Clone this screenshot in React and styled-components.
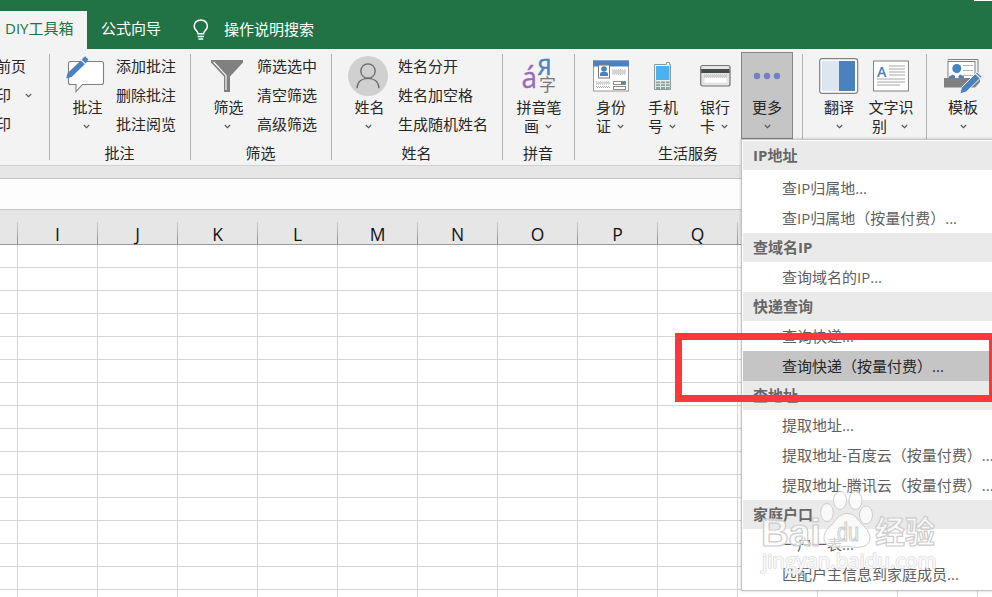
import React from "react";
import styled, { createGlobalStyle, css } from "styled-components";

const FONT = `"Open Sans", "Noto Sans CJK SC", sans-serif`;

const columns = ["I", "J", "K", "L", "M", "N", "O", "P", "Q", "R", "S", "T", "U"];

const menu = [
  { title: "IP地址", spaced: true, items: ["查IP归属地...", "查IP归属地（按量付费）..."] },
  { title: "查域名IP", items: ["查询域名的IP..."] },
  { title: "快递查询", items: ["查询快递...", "查询快递（按量付费）..."] },
  {
    title: "查地址",
    items: ["提取地址...", "提取地址-百度云（按量付费）...", "提取地址-腾讯云（按量付费）..."],
  },
  { title: "家庭户口", items: ["一户一表...", "匹配户主信息到家庭成员..."] },
];

const ACTIVE_ITEM = "查询快递（按量付费）...";

const Caret = () => (
  <CaretSvg viewBox="0 0 7 5">
    <path d="M0.8 1 L3.5 3.7 L6.2 1" fill="none" stroke="#555" strokeWidth="1.1" />
  </CaretSvg>
);

const BulbIcon = () => (
  <svg width="16" height="22" viewBox="0 0 16 22" fill="none" stroke="#fff" strokeWidth="1.5">
    <path d="M5 14.8 C5 12 1.2 11 1.2 7.2 C1.2 3.4 4.2 0.9 7.8 0.9 C11.4 0.9 14.4 3.4 14.4 7.2 C14.4 11 10.6 12 10.6 14.8 Z" />
    <path d="M4.6 17.4 H11 M5.4 19.9 H10.2" />
  </svg>
);

const CommentIcon = () => (
  <svg width="40" height="40" viewBox="0 0 40 40">
    <path
      d="M4.5 5.5 H35.5 Q37.5 5.5 37.5 7.5 V26.5 Q37.5 28.5 35.5 28.5 H16.5 L10 35.5 V28.5 H4.5 Q2.5 28.5 2.5 26.5 V7.5 Q2.5 5.5 4.5 5.5 Z"
      fill="#fff"
      stroke="#808080"
      strokeWidth="1.1"
    />
    <path d="M0.2 22.6 L1.6 17 L17 2.4 L21 6 L5.6 21 Z" fill="#4a82bd" />
    <path d="M15 4 L19.6 8.2" stroke="#f3f3f3" strokeWidth="1.1" />
    <path d="M16.6 2.4 L19 0.2 L22.4 3.6 L20.6 6 Z" fill="#4a82bd" />
  </svg>
);

const FunnelIcon = () => (
  <svg width="32" height="32" viewBox="0 0 32 32">
    <path d="M0 0 H32 V2.5 L19 16.5 V32 H13 V16.5 L0 2.5 Z" fill="#808080" />
    <path d="M2.6 2 L15 15.4 V30" fill="none" stroke="#f7f7f7" strokeWidth="1.2" />
  </svg>
);

const PersonIcon = () => (
  <svg width="40" height="40" viewBox="0 0 40 40">
    <circle cx="20" cy="20" r="20" fill="#d0d0d0" />
    <g fill="none" stroke="#666" strokeWidth="1.3">
      <circle cx="20" cy="15" r="7.2" />
      <path d="M9 32.2 C9.4 25.6 14 22.3 20 22.3 C26 22.3 30.6 25.6 31 32.2" />
    </g>
  </svg>
);

const PinyinIcon = () => (
  <svg width="36" height="36" viewBox="0 0 36 36">
    <text x="0.5" y="30.3" fontSize="30" fill="#9a68bd" stroke="#9a68bd" strokeWidth="0.3" textLength="15.5" lengthAdjust="spacingAndGlyphs">á</text>
    <text x="16.5" y="17.3" fontSize="22" fill="#4a82bd" stroke="#4a82bd" strokeWidth="0.6">Я</text>
    <text x="18" y="33" fontSize="17" fill="#777">字</text>
  </svg>
);

const IdCardIcon = () => (
  <svg width="36" height="32" viewBox="0 0 36 32">
    <rect x="0.5" y="1" width="35" height="30" fill="#fff" stroke="#999" />
    <rect width="36" height="6" y="0.5" fill="#4a82bd" />
    <rect x="5.5" y="5" width="11" height="13" fill="#fff" stroke="#777" />
    <circle cx="11" cy="9" r="2.8" fill="#4a82bd" />
    <path d="M7 16 V14 Q7 12 9 12 H13 Q15 12 15 14 V16 Z" fill="#4a82bd" />
    <g stroke="#aaa" strokeDasharray="1 1">
      <path d="M19 10 H33 M20 11 H33 M19 12 H33 M20 13 H33 M19 14 H33" />
      <path d="M3 22 H17 M4 23 H17 M3 24 H17 M3 26.5 H17 M4 27.5 H17" />
    </g>
    <rect x="20.5" y="21.5" width="12" height="3" fill="#fff" stroke="#8c8c8c" />
    <rect x="28" y="22" width="4" height="2" fill="#4a82bd" />
    <rect x="20.5" y="26.5" width="12" height="3" fill="#fff" stroke="#8c8c8c" />
  </svg>
);

const PhoneIcon = () => (
  <svg width="18" height="28" viewBox="0 0 18 28">
    <path d="M0.5 2.5 H12.5 V0.5 H15.5 V2.5 H16.5 V27.5 H0.5 Z" fill="#f3f3f3" stroke="#8b9b9b" />
    <rect x="2" y="4" width="13.5" height="14" fill="#4eb1ee" />
    <rect x="1" y="18.5" width="15" height="8.5" fill="#dfe9e7" />
    <path d="M2 20.3 H15.5 M2 23.2 H15.5 M2 26 H15.5" stroke="#8fa09c" strokeWidth="1.8" strokeDasharray="4 1" />
  </svg>
);

const BankCardIcon = () => (
  <svg width="31" height="24" viewBox="0 0 31 24">
    <rect x="0.7" y="1.5" width="29.3" height="20.5" rx="2" fill="#e4e4e4" stroke="#737373" strokeWidth="1.2" />
    <rect x="1.2" y="5" width="28.3" height="4" fill="#454c47" />
    <path d="M4 11 H27 M5 12 H27 M4 13 H27" stroke="#b9b9b9" strokeDasharray="1 1" />
    <rect x="4.5" y="14" width="22" height="4.5" fill="#fff" />
  </svg>
);

const MoreIcon = () => (
  <svg width="28" height="8" viewBox="0 0 28 8" fill="#7181c1">
    <circle cx="4" cy="4" r="3.2" />
    <circle cx="14" cy="4" r="3.2" />
    <circle cx="24" cy="4" r="3.2" />
  </svg>
);

const TranslateIcon = () => (
  <svg width="40" height="36" viewBox="0 0 40 36">
    <rect x="0.7" y="0.7" width="38" height="34.6" rx="2.5" fill="#fff" stroke="#808080" strokeWidth="1.2" />
    <rect x="3" y="3" width="17" height="30" fill="#dce6f1" />
    <rect x="20" y="3" width="16" height="30" fill="#4a82bd" />
  </svg>
);

const TextIcon = () => (
  <svg width="36" height="32" viewBox="0 0 36 32">
    <rect x="0.5" y="1" width="35" height="30" fill="#fff" stroke="#808080" />
    <text x="4" y="16.5" fontSize="14" fontWeight="600" fill="#4a82bd" textLength="9.5" lengthAdjust="spacingAndGlyphs">A</text>
    <path d="M16 6 H32 M16 9 H32 M16 12 H32 M16 15 H32 M4 19 H32 M4 22 H32 M4 25 H27" stroke="#a6a6a6" />
  </svg>
);

const TemplateIcon = () => (
  <svg width="40" height="36" viewBox="-1 0 40 36">
    <path d="M4 2.5 V1.5 H34 V15" fill="none" stroke="#808080" />
    <rect x="4" y="3.5" width="27" height="17" fill="#fff" stroke="#808080" />
    <circle cx="12.8" cy="10.5" r="4.5" fill="#4a82bd" />
    <path d="M5 20 V18.5 L9 16.4 L11 18 V20 Z M14.5 20 V18 L16.5 16.4 L20 18.5 V20 Z" fill="#4a82bd" />
    <path d="M19 7.5 H29 M19 12.5 H29 M19 17.5 H29" stroke="#b5b5b5" />
    <path d="M0 20 H36 V24 L31 29.5 H0 Z" fill="#808080" />
    <path d="M15.8 36 L17.4 29.6 L33 14 L38 18.6 L22.2 34 Z" fill="#4a82bd" stroke="#f3f3f3" strokeWidth="1" />
    <path d="M31.4 15.5 L36 20" stroke="#f3f3f3" strokeWidth="1.1" />
  </svg>
);

const Tool = ({ icon, label, second, gap, nudge, pressed }) => (
  <ToolButton $pressed={pressed}>
    <IconBox>{icon}</IconBox>
    <ToolLabel $nudge={nudge}>{label}</ToolLabel>
    <ToolSecond $gap={gap}>
      {second && <span>{second}</span>}
      <Caret />
    </ToolSecond>
  </ToolButton>
);

const App = () => {
  return (
    <>
      <GlobalStyle />
      <Window>
        <TabBar>
          <Tab $active>DIY工具箱</Tab>
          <Tab>公式向导</Tab>
          <Search>
            <BulbIcon />
            <SearchText>操作说明搜索</SearchText>
          </Search>
          <Sliver />
        </TabBar>

        <Ribbon>
          <Group $width={49} $bare>
            <Tools>
              <CutStack>
                <StackItem>前页</StackItem>
                <StackItem>
                  印 <Caret />
                </StackItem>
                <StackItem>印</StackItem>
              </CutStack>
            </Tools>
          </Group>
          <Separator />
          <Group $width={140}>
            <Tools>
              <Tool icon={<CommentIcon />} label="批注" nudge={3} />
              <Stack>
                <StackItem>添加批注</StackItem>
                <StackItem>删除批注</StackItem>
                <StackItem>批注阅览</StackItem>
              </Stack>
            </Tools>
            <GroupName>批注</GroupName>
          </Group>
          <Separator />
          <Group $width={140}>
            <Tools>
              <Tool icon={<FunnelIcon />} label="筛选" nudge={3} />
              <Stack>
                <StackItem>筛选选中</StackItem>
                <StackItem>清空筛选</StackItem>
                <StackItem>高级筛选</StackItem>
              </Stack>
            </Tools>
            <GroupName>筛选</GroupName>
          </Group>
          <Separator />
          <Group $width={170}>
            <Tools>
              <Tool icon={<PersonIcon />} label="姓名" nudge={3} />
              <Stack>
                <StackItem>姓名分开</StackItem>
                <StackItem>姓名加空格</StackItem>
                <StackItem>生成随机姓名</StackItem>
              </Stack>
            </Tools>
            <GroupName>姓名</GroupName>
          </Group>
          <Separator />
          <Group $width={71}>
            <Tools>
              <Tool icon={<PinyinIcon />} label="拼音笔" second="画" gap={6} />
            </Tools>
            <GroupName>拼音</GroupName>
          </Group>
          <Separator />
          <Group $width={227}>
            <Tools>
              <Tool icon={<IdCardIcon />} label="身份" second="证" gap={6} />
              <Tool icon={<PhoneIcon />} label="手机" second="号" gap={6} />
              <Tool icon={<BankCardIcon />} label="银行" second="卡" gap={6} />
              <Tool icon={<MoreIcon />} label="更多" pressed />
            </Tools>
            <GroupName>生活服务</GroupName>
          </Group>
          <Separator />
          <Group $width={123}>
            <Tools>
              <Tool icon={<TranslateIcon />} label="翻译" />
              <Tool icon={<TextIcon />} label="文字识" second="别" gap={14} />
            </Tools>
          </Group>
          <Separator />
          <Group $width={65}>
            <Tools>
              <Tool icon={<TemplateIcon />} label="模板" />
            </Tools>
          </Group>
        </Ribbon>

        <Strip />
        <FormulaBar />
        <ColumnHeads>
          <ColumnHead $first />
          {columns.map((name) => (
            <ColumnHead key={name}>{name}</ColumnHead>
          ))}
        </ColumnHeads>
        <Sheet />

        <Menu>
          {menu.map((section) => (
            <React.Fragment key={section.title}>
              <MenuTitle>{section.title}</MenuTitle>
              <MenuItems $spaced={section.spaced}>
                {section.items.map((item) => (
                  <MenuItem key={item} $active={item === ACTIVE_ITEM}>
                    {item}
                  </MenuItem>
                ))}
              </MenuItems>
            </React.Fragment>
          ))}
        </Menu>

        <Watermark viewBox="0 0 190 90">
          <g fill="#fff" fillOpacity="0.7" stroke="#cccccc" strokeWidth="1" strokeLinejoin="round">
            <ellipse cx="67" cy="22.5" rx="6.3" ry="9" />
            <ellipse cx="80" cy="10.5" rx="6.5" ry="9" />
            <ellipse cx="95.5" cy="10.5" rx="6.5" ry="9" />
            <ellipse cx="106" cy="25" rx="6.5" ry="9" />
            <path d="M87 23.5 C96 23.5 98 31 104 36.5 C112 43.5 113 55 101 57 C95 58 92 56.5 87 56.5 C82 56.5 79 58 73 57 C61 55 62 43.5 70 36.5 C76 31 78 23.5 87 23.5 Z" />
            <text x="1" y="56" fontSize="38" fontWeight="bold" strokeWidth="1.2" textLength="60" lengthAdjust="spacingAndGlyphs">Bai</text>
            <text x="77" y="50.5" fontSize="25" strokeWidth="1.2" textLength="22" lengthAdjust="spacingAndGlyphs">du</text>
            <text x="115" y="53" fontSize="31" fontWeight="bold" strokeWidth="1.2" textLength="60" lengthAdjust="spacingAndGlyphs">经验</text>
            <Address x="2" y="78">jingyan.baidu.com</Address>
          </g>
        </Watermark>

        <Marker />
      </Window>
    </>
  );
};

const GlobalStyle = createGlobalStyle`
  * {
    box-sizing: border-box;
  }
  body {
    margin: 0;
    overflow: hidden;
    background: #fff;
  }
`;

const Window = styled.div`
  position: relative;
  display: flex;
  flex-direction: column;
  width: 992px;
  height: 597px;
  overflow: hidden;
  font-family: ${FONT};
  font-size: 15px;
  color: #262626;
  white-space: nowrap;
`;

const TabBar = styled.div`
  display: flex;
  flex: none;
  height: 49px;
  padding-top: 11px;
  background: #217346;
  color: #fff;
`;

const Tab = styled.div`
  height: 38px;
  padding: 0 13px 0 5px;
  line-height: 35px;
  ${(p) =>
    p.$active
      ? css`
          width: 87px;
          background: #f3f3f3;
          color: #217346;
        `
      : css`
          padding-left: 14px;
        `}
`;

const Search = styled.div`
  display: flex;
  align-items: center;
  gap: 15px;
  height: 37px;
  margin-left: 19px;
`;

const SearchText = styled.span`
  padding-bottom: 2px;
`;

const Sliver = styled.div`
  width: 18px;
  height: 1px;
  margin: -11px 0 0 auto;
  background: #fff;
`;

const Ribbon = styled.div`
  display: flex;
  flex: none;
  height: 117px;
  padding-top: 3px;
  background: #f3f3f3;
  border-bottom: 1px solid #d2d2d2;
`;

const Group = styled.div`
  flex: none;
  width: ${(p) => p.$width}px;

  > :first-child {
    padding-left: ${(p) => (p.$bare ? 0 : 10)}px;
  }
`;

const Separator = styled.div`
  flex: none;
  width: 1px;
  height: 106px;
  margin-top: 2px;
  background: #b1b1b1;
`;

const Tools = styled.div`
  display: flex;
  height: 87px;
`;

const GroupName = styled.div`
  height: 26px;
  padding-right: 1px;
  line-height: 28px;
  text-align: center;
`;

const ToolButton = styled.div`
  display: flex;
  flex-direction: column;
  flex: none;
  align-items: center;
  width: 52px;
  height: 87px;
  ${(p) =>
    p.$pressed &&
    css`
      background: #c5c5c5;
      box-shadow: inset 0 0 0 1px #868686;
    `}
`;

const IconBox = styled.div`
  display: flex;
  flex: none;
  align-items: center;
  height: 47px;
`;

const ToolLabel = styled.div`
  height: 19px;
  margin-top: -1px;
  padding-left: ${(p) => p.$nudge || 0}px;
  line-height: 18px;
`;

const ToolSecond = styled.div`
  display: flex;
  align-items: center;
  gap: ${(p) => p.$gap || 0}px;
  height: 18px;
  margin-left: ${(p) => (p.$gap ? -2 : 0)}px;
  line-height: 18px;
`;

const CaretSvg = styled.svg`
  width: 7px;
  height: 5px;
`;

const Stack = styled.div`
  margin-left: 4px;
`;

const CutStack = styled.div`
  margin-left: -4px;
`;

const StackItem = styled.div`
  display: flex;
  align-items: center;
  gap: 14px;
  height: 29px;
  line-height: 29px;
`;

const Strip = styled.div`
  flex: none;
  height: 13px;
  background: #e6e6e6;
  border-bottom: 1px solid #c6c6c6;
`;

const FormulaBar = styled.div`
  flex: none;
  height: 31px;
  background: #fdfdfd;
  border-bottom: 1px solid #c6c6c6;
`;

const ColumnHeads = styled.div`
  display: flex;
  flex: none;
  height: 35px;
  padding-top: 12px;
  background: #e6e6e6;
  border-bottom: 1px solid #999;
`;

const ColumnHead = styled.div`
  flex: none;
  width: ${(p) => (p.$first ? 18 : 80)}px;
  height: 22px;
  border-right: 1px solid;
  border-image: linear-gradient(#cfcfcf, #8c8c8c) 1;
  border-width: 0 1px 0 0;
  color: #111;
  font-size: 17.5px;
  line-height: 24px;
  text-align: center;
`;

const Sheet = styled.div`
  flex: 1;
  background-color: #fff;
  background-image: linear-gradient(to right, #d4d4d4 1px, transparent 1px),
    linear-gradient(to bottom, transparent 22px, #d4d4d4 22px);
  background-size: 80px 100%, 100% 23px;
  background-position: 17px 0, 0 0;
`;

const Menu = styled.div`
  position: absolute;
  top: 139px;
  left: 741px;
  width: 262px;
  height: 452px;
  padding: 1px 0 0 1px;
  background: #fff;
  border: 1px solid #c3c3c3;
  box-shadow: 0 0 3px rgba(0, 0, 0, 0.2);
  color: #5f5f5f;
`;

const MenuTitle = styled.div`
  height: 29px;
  padding-left: 10px;
  background: #eaeaea;
  color: #666;
  font-weight: bold;
  line-height: 29px;
`;

const MenuItems = styled.div`
  padding-top: ${(p) => (p.$spaced ? 3 : 0)}px;
`;

const MenuItem = styled.div`
  height: 30px;
  padding-left: 39px;
  line-height: 30px;
  ${(p) =>
    p.$active &&
    css`
      background: #c5c5c5;
      color: #262626;
    `}
`;

const Watermark = styled.svg`
  position: absolute;
  top: 490px;
  left: 760px;
  width: 190px;
  height: 90px;
  font-family: "Liberation Sans", "Noto Sans CJK SC", sans-serif;
`;

const Address = styled.text`
  font-family: ${FONT};
  font-size: 20.5px;
  paint-order: stroke;
  stroke: #dcdcdc;
  stroke-width: 1.6px;
  fill-opacity: 0.9;
`;

const Marker = styled.div`
  position: absolute;
  top: 333px;
  left: 675px;
  width: 321px;
  height: 69px;
  border: 7px solid #fd3838;
`;

export default App;
